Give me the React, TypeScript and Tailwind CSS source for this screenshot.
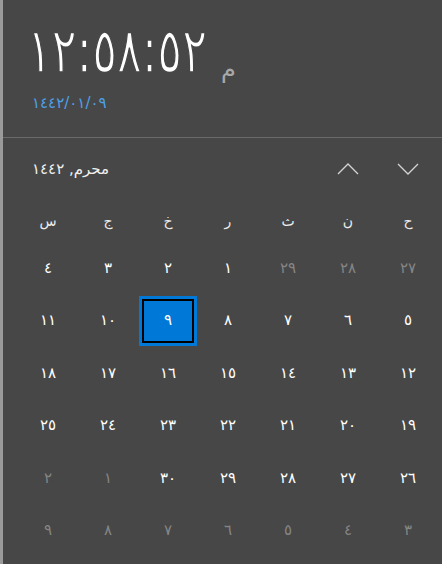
import React from "react";

const ar = (n: number) =>
  String(n).replace(/[0-9]/g, (d) => "٠١٢٣٤٥٦٧٨٩"[Number(d)]);

type Cell = { n: number; dim: boolean };

const rows: Cell[][] = [
  [27, 28, 29].map((n) => ({ n, dim: true })).concat([1, 2, 3, 4].map((n) => ({ n, dim: false }))),
  [5, 6, 7, 8, 9, 10, 11].map((n) => ({ n, dim: false })),
  [12, 13, 14, 15, 16, 17, 18].map((n) => ({ n, dim: false })),
  [19, 20, 21, 22, 23, 24, 25].map((n) => ({ n, dim: false })),
  [26, 27, 28, 29, 30].map((n) => ({ n, dim: false })).concat([1, 2].map((n) => ({ n, dim: true }))),
  [3, 4, 5, 6, 7, 8, 9].map((n) => ({ n, dim: true })),
];

const weekdays = ["ح", "ن", "ث", "ر", "خ", "ج", "س"];

export default function App() {
  return (
    <div
      className="w-[442px] h-[564px] bg-[#474747] border-l-[3px] border-[#9a9a9a] overflow-hidden flex flex-col text-white"
      style={{ fontFamily: '"DejaVu Sans", "Noto Sans", sans-serif' }}
    >
      {/* clock */}
      <div className="h-[137px] pl-[29px] pt-[18px] flex flex-col">
        <div className="flex items-end" dir="ltr">
          <span
            className="-ml-[5px] text-[62px] leading-[66px] origin-left scale-x-[0.745] inline-block w-[176px] whitespace-nowrap [-webkit-text-stroke:1.6px_#474747] [paint-order:fill]"
            style={{ unicodeBidi: "isolate" }}
          >
            ١٢:٥٨:٥٢
          </span>
          <span className="text-[24px] leading-[30px] text-[#a8a8a8] ml-[18px]">م</span>
        </div>
        <div className="mt-[9px] text-[15px] leading-[20px] text-[#4ea1e8]" dir="ltr" style={{ unicodeBidi: "isolate" }}>
          ١٤٤٢/٠١/٠٩
        </div>
      </div>
      <div className="h-px bg-[#6b6b6b]" />

      {/* month header */}
      <div className="h-[62px] flex items-center justify-between pl-[29px] pr-[4px]">
        <span className="text-[15px] leading-[20px] text-[#f0f0f0]" dir="rtl">
          محرم, ١٤٤٢
        </span>
        <div className="flex">
          <div className="w-[60px] h-[40px] flex items-center justify-center">
            <svg width="22" height="12" viewBox="0 0 22 12" fill="none">
              <path d="M1 11 L11 1 L21 11" stroke="#d4d4d4" strokeWidth="1.3" />
            </svg>
          </div>
          <div className="w-[60px] h-[40px] flex items-center justify-center">
            <svg width="22" height="12" viewBox="0 0 22 12" fill="none">
              <path d="M1 1 L11 11 L21 1" stroke="#d4d4d4" strokeWidth="1.3" />
            </svg>
          </div>
        </div>
      </div>

      {/* weekdays */}
      <div className="pl-[15px]">
        <div className="w-[420px] grid grid-cols-7 h-[42px] items-center" dir="rtl">
          {weekdays.map((w) => (
            <div key={w} className="text-center text-[14px] text-[#ececec]">
              {w}
            </div>
          ))}
        </div>
        <div className="w-[420px] grid grid-cols-7 auto-rows-[52.4px]" dir="rtl">
          {rows.flat().map((c, i) =>
            !c.dim && c.n === 9 ? (
              <div key={i} className="flex items-center justify-center">
                <div className="w-[58px] h-[50px] border-[3px] border-[#0078d7] flex">
                  <div className="flex-1 border-2 border-black bg-[#0078d7] flex items-center justify-center text-[15px] text-white">
                    {ar(c.n)}
                  </div>
                </div>
              </div>
            ) : (
              <div
                key={i}
                className={`flex items-center justify-center text-[15px] ${c.dim ? "text-[#858585]" : "text-white"}`}
              >
                {ar(c.n)}
              </div>
            )
          )}
        </div>
      </div>
    </div>
  );
}
